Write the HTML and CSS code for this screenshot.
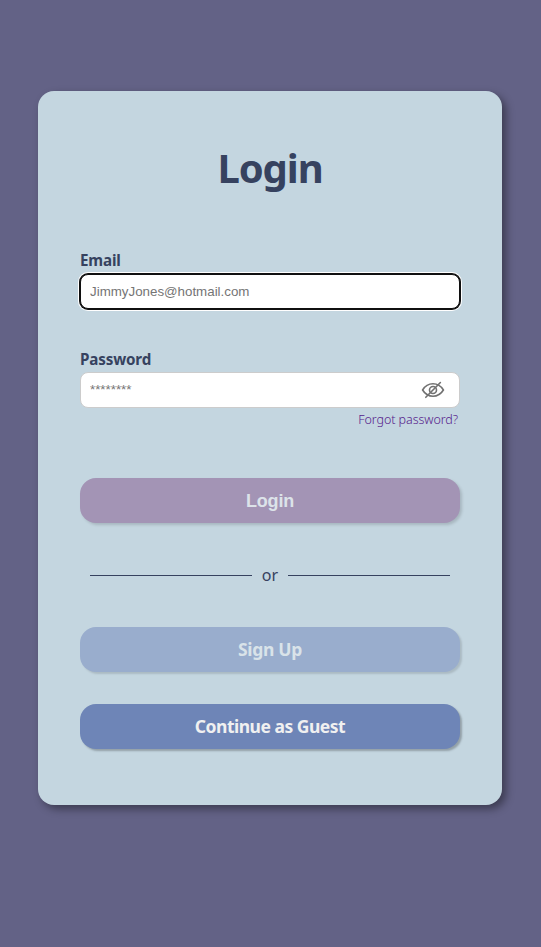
FILE: index.html
```html
<!DOCTYPE html>
<html lang="en">
<head>
<meta charset="utf-8">
<title>Login</title>
<link rel="stylesheet" href="styles.css">
</head>
<body>
<main class="card">
  <h1><span>Login</span></h1>
  <form>
    <label class="label-email" for="email"><span>Email</span></label>
    <div class="field field-focused"><input id="email" type="email" placeholder="JimmyJones@hotmail.com"></div>
    <label class="label-password" for="password"><span>Password</span></label>
    <div class="field">
      <input id="password" type="password" placeholder="********">
      <svg class="eye" viewBox="0 0 24 18" fill="none" stroke="#717171" stroke-width="1.6" stroke-linecap="round">
        <path d="M1.600 9C4 5 7.600 2.800 12 2.800S20 5 22.400 9C20 13 16.400 15.200 12 15.200S4 13 1.600 9Z"/>
        <circle cx="12" cy="9" r="3.500"/>
        <path d="M4.800 16.300 19.400 1.500"/>
      </svg>
    </div>
    <a class="forgot" href="#"><span>Forgot password?</span></a>
    <button class="btn login" type="button"><span>Login</span></button>
    <div class="divider"><span>or</span></div>
    <button class="btn signup" type="button"><span>Sign Up</span></button>
    <button class="btn guest" type="button"><span>Continue as Guest</span></button>
  </form>
</main>
</body>
</html>
```
FILE: styles.css
```css
* { box-sizing: border-box; }
body {
  margin: 0;
  height: 947px;
  padding: 91px 39px 0 38px;
  background: #636286;
  color: #36425f;
  font-family: "Segoe UI", "Noto Sans", sans-serif;
}
.card {
  height: 714px;
  padding: 48px 42px 0;
  background: #c4d6e0;
  border-radius: 16px;
  box-shadow: 4px 4px 8px rgba(0, 0, 0, .4);
}
h1 {
  margin: 0;
  height: 56px;
  font-size: 40px;
  line-height: 58px;
  letter-spacing: -1.1px;
  text-align: center;
}
form { display: flex; flex-direction: column; }
label {
  height: 22px;
  font-size: 15.2px;
  font-weight: 700;
  line-height: 22px;
  letter-spacing: -.15px;
}
.label-email { margin-top: 54px; }
.label-password { margin-top: 39px; }
.field {
  display: flex;
  align-items: center;
  height: 36px;
  margin-top: 2px;
  padding: 0 14px 0 9px;
  border: 1px solid #ccc;
  border-radius: 8px;
  background: #fff;
}
.field-focused {
  height: 35px;
  margin-top: 3px;
  border-color: #101010;
  box-shadow: 0 0 0 1px #101010, 0 0 0 2px #fff;
}
input {
  flex: 1;
  min-width: 0;
  padding: 0;
  border: 0;
  outline: 0;
  background: none;
  font: 13.333px/16px "Liberation Sans", Arial, sans-serif;
}
input::placeholder { color: #757575; }
.eye { width: 24px; height: 18px; margin-top: -1px; }
.forgot {
  align-self: flex-end;
  height: 20px;
  margin: 2px 2px 0 0;
  color: #551a8b;
  font-size: 12.5px;
  font-weight: 300;
  line-height: 20px;
  letter-spacing: -.06px;
  text-decoration: none;
}
.btn {
  height: 45px;
  padding: 0 0 3px;
  border: 0;
  border-radius: 16px;
  color: #f0f0f0;
  font: 700 17.5px/24px "Segoe UI", "Noto Sans", sans-serif;
  letter-spacing: -.5px;
  box-shadow: 2px 2px 2px rgba(0, 0, 0, .25);
}
.login {
  margin-top: 48px;
  padding-bottom: 0;
  background: #a394b5;
  color: #dce3e9;
  font-family: "Liberation Sans", Arial, sans-serif;
  font-size: 18px;
  letter-spacing: -.2px;
  box-shadow: 2px 2px 3px rgba(0, 0, 0, .15);
}
.divider {
  display: flex;
  align-items: center;
  gap: 10px;
  height: 24px;
  margin: 40px 10px 0;
  font-size: 16px;
  line-height: 24px;
}
.divider::before, .divider::after { content: ""; flex: 1; height: 1px; background: #36425f; }
.signup {
  margin-top: 40px;
  padding-bottom: 2px;
  background: #99adcd;
  color: #d9e3e9;
  letter-spacing: -.3px;
  box-shadow: 2px 2px 2px rgba(0, 0, 0, .13);
}
.guest { margin-top: 32px; padding-bottom: 2px; background: #6e85b7; }
```
